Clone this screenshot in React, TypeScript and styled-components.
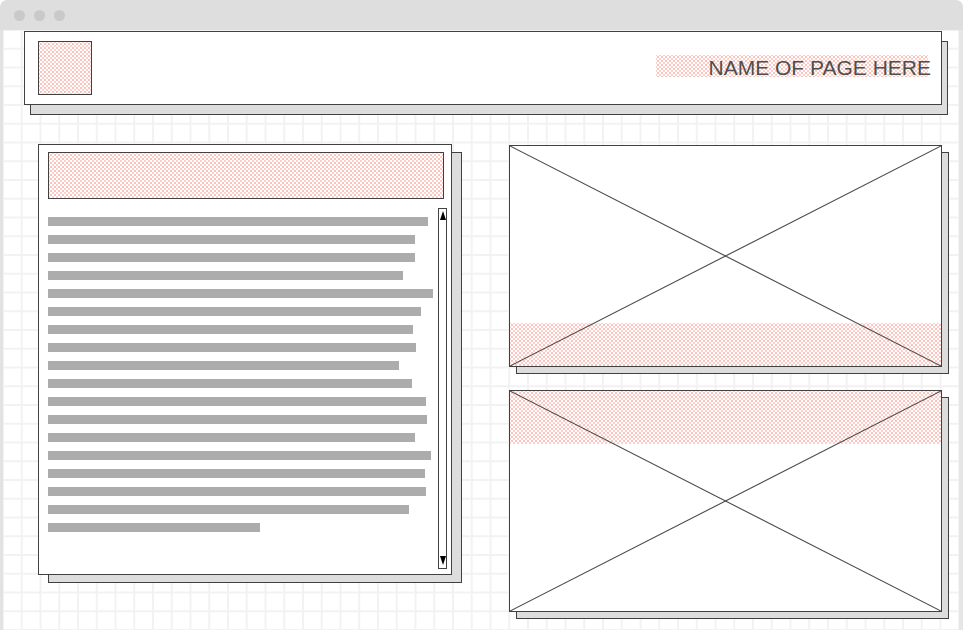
import React from "react";
import styled, { createGlobalStyle } from "styled-components";

const GlobalStyle = createGlobalStyle`
  html, body { margin: 0; padding: 0; background: #ffffff; }
  body { font-family: "Liberation Sans", Arial, sans-serif; }
  * { box-sizing: border-box; }
`;

const INK = "#414141";

const dotted = `
  background-color: #ffffff;
  background-image:
    radial-gradient(circle at center, #f37d70 0.6px, transparent 0.8px),
    radial-gradient(circle at center, #fcd0c8 0.85px, transparent 1.05px);
  background-size: 4px 4px, 4px 4px;
  background-position: 0 0, 2px 2px;
`;

const Window = styled.div`
  width: 963px;
  height: 630px;
  overflow: hidden;
  display: flex;
  flex-direction: column;
`;

const TitleBar = styled.div`
  height: 30px;
  flex: none;
  background: #dedede;
  border-radius: 7px 7px 0 0;
  display: flex;
  align-items: center;
  gap: 9px;
  padding-left: 14px;
`;

const Dot = styled.span`
  width: 11px;
  height: 11px;
  border-radius: 50%;
  background: #c9c9c9;
`;

const Canvas = styled.div`
  flex: 1;
  border-left: 3px solid #e2e2e2;
  border-right: 4px solid #e6e6e6;
  background-color: #ffffff;
  background-image:
    linear-gradient(to right, #f2f2f2 2px, transparent 2px),
    linear-gradient(to bottom, #f2f2f2 2px, transparent 2px);
  background-size: 18.75px 18.75px;
  background-position: -1px -1px;
  padding: 1px 0 0 21px;
`;

const Header = styled.header`
  width: 918px;
  height: 74px;
  border: 1px solid ${INK};
  background: #ffffff;
  box-shadow: 6px 10px 0 -1px #dddddd, 6px 10px 0 0 ${INK};
  display: flex;
  align-items: flex-start;
  justify-content: space-between;
  padding: 9px 13px 0 13px;
`;

const Logo = styled.div`
  width: 54px;
  height: 54px;
  border: 1px solid ${INK};
  ${dotted}
`;

const PageTitle = styled.div`
  margin-top: 14px;
  width: 272px;
  height: 22px;
  ${dotted}
  display: flex;
  justify-content: flex-end;
  font-size: 21px;
  line-height: 26px;
  color: #4e4e4e;
  white-space: nowrap;
`;

const TitleText = styled.span`
  margin-right: -3px;
`;

const Main = styled.main`
  display: flex;
  align-items: flex-start;
  gap: 57px;
  margin: 39px 0 0 14px;
`;

const TextPanel = styled.section`
  width: 414px;
  height: 431px;
  border: 1px solid ${INK};
  background: #ffffff;
  box-shadow: 10px 8px 0 -1px #dddddd, 10px 8px 0 0 ${INK};
  padding: 7px 4px 0 9px;
  display: flex;
  flex-direction: column;
`;

const PanelHeading = styled.div`
  width: 396px;
  height: 47px;
  border: 1px solid ${INK};
  ${dotted}
`;

const TextBody = styled.div`
  margin-top: 9px;
  display: flex;
  justify-content: space-between;
`;

const Lines = styled.div`
  padding-top: 9px;
  display: flex;
  flex-direction: column;
  gap: 9px;
`;

const Line = styled.div<{ $w: number }>`
  width: ${(p) => p.$w}px;
  height: 9px;
  background: #acacac;
`;

const Scrollbar = styled.div`
  width: 9px;
  height: 361px;
  border: 1px solid ${INK};
  background: #ffffff;
  display: flex;
  flex-direction: column;
  justify-content: space-between;
  align-items: center;
  padding: 2px 0 3px;
`;

const ArrowUp = styled.span`
  width: 0;
  height: 0;
  border-left: 3.5px solid transparent;
  border-right: 3.5px solid transparent;
  border-bottom: 9px solid #000000;
`;

const ArrowDown = styled.span`
  width: 0;
  height: 0;
  border-left: 3.5px solid transparent;
  border-right: 3.5px solid transparent;
  border-top: 9px solid #000000;
`;

const ImageColumn = styled.div`
  margin-top: 1px;
  width: 433px;
  display: flex;
  flex-direction: column;
  gap: 23px;
`;

const ImageBox = styled.figure`
  margin: 0;
  height: 222px;
  border: 1px solid ${INK};
  background: #ffffff;
  box-shadow: 7px 7px 0 -1px #dddddd, 7px 7px 0 0 ${INK};
  display: grid;
  & > * {
    grid-area: 1 / 1;
  }
`;

const Band = styled.div<{ $at: "top" | "bottom"; $h: number }>`
  align-self: ${(p) => (p.$at === "top" ? "start" : "end")};
  height: ${(p) => p.$h}px;
  ${dotted}
`;

const Cross = styled.svg`
  width: 100%;
  height: 100%;
  display: block;
`;

const lineWidths = [380, 367, 367, 355, 385, 373, 365, 368, 351, 364, 378, 379, 367, 383, 377, 378, 361, 212];

function Placeholder({ at, h }: { at: "top" | "bottom"; h: number }) {
  return (
    <ImageBox>
      <Band $at={at} $h={h} />
      <Cross viewBox="0 0 100 100" preserveAspectRatio="none">
        <line x1="0" y1="0" x2="100" y2="100" stroke="#4a4a4a" strokeWidth="1.1" vectorEffect="non-scaling-stroke" />
        <line x1="100" y1="0" x2="0" y2="100" stroke="#4a4a4a" strokeWidth="1.1" vectorEffect="non-scaling-stroke" />
      </Cross>
    </ImageBox>
  );
}

export default function App() {
  return (
    <>
      <GlobalStyle />
      <Window>
        <TitleBar>
          <Dot />
          <Dot />
          <Dot />
        </TitleBar>
        <Canvas>
          <Header>
            <Logo />
            <PageTitle>
              <TitleText>NAME OF PAGE HERE</TitleText>
            </PageTitle>
          </Header>
          <Main>
            <TextPanel>
              <PanelHeading />
              <TextBody>
                <Lines>
                  {lineWidths.map((w, i) => (
                    <Line key={i} $w={w} />
                  ))}
                </Lines>
                <Scrollbar>
                  <ArrowUp />
                  <ArrowDown />
                </Scrollbar>
              </TextBody>
            </TextPanel>
            <ImageColumn>
              <Placeholder at="bottom" h={43} />
              <Placeholder at="top" h={53} />
            </ImageColumn>
          </Main>
        </Canvas>
      </Window>
    </>
  );
}
